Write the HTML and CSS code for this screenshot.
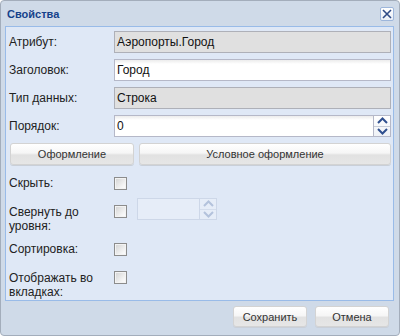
FILE: index.html
```html
<!DOCTYPE html>
<html lang="ru">
<head>
    <meta charset="UTF-8">
    <title>Свойства</title>
    <link rel="stylesheet" href="styles.css">
</head>
<body>
    <div class="window">
        <div class="window-header">
            <span class="window-title">Свойства</span>
            <span class="tool-close">
                <svg width="10" height="10" viewBox="0 0 10 10"><path d="M1 1L9 9M9 1L1 9" stroke="#2d4a86" stroke-width="1.6" fill="none"/></svg>
            </span>
        </div>
        <div class="window-body">
            <div class="field-row">
                <label class="field-label">Атрибут:</label>
                <div class="field disabled">Аэропорты.Город</div>
            </div>
            <div class="field-row">
                <label class="field-label">Заголовок:</label>
                <div class="field">Город</div>
            </div>
            <div class="field-row">
                <label class="field-label">Тип данных:</label>
                <div class="field disabled">Строка</div>
            </div>
            <div class="field-row">
                <label class="field-label">Порядок:</label>
                <div class="spinner">
                    <div class="field spinner-input">0</div>
                    <div class="spinner-trigger">
                        <span class="spin-up"><svg width="11" height="7" viewBox="0 0 11 7"><path d="M1 6L5.5 1.5L10 6" stroke="#2f4f8f" stroke-width="2" fill="none"/></svg></span>
                        <span class="spin-down"><svg width="11" height="7" viewBox="0 0 11 7"><path d="M1 1L5.5 5.5L10 1" stroke="#2f4f8f" stroke-width="2" fill="none"/></svg></span>
                    </div>
                </div>
            </div>
            <div class="button-row">
                <button class="btn btn-style">Оформление</button>
                <button class="btn btn-cond">Условное оформление</button>
            </div>

            <div class="check-row row-hide">
                <label class="field-label">Скрыть:</label>
                <span class="checkbox"></span>
            </div>
            <div class="check-row row-collapse">
                <label class="field-label">Свернуть до уровня:</label>
                <span class="checkbox"></span>
                <div class="spinner spinner-small off">
                    <div class="field spinner-input"></div>
                    <div class="spinner-trigger">
                        <span class="spin-up"><svg width="11" height="7" viewBox="0 0 11 7"><path d="M1 6L5.5 1.5L10 6" stroke="#b3c2dc" stroke-width="2" fill="none"/></svg></span>
                        <span class="spin-down"><svg width="11" height="7" viewBox="0 0 11 7"><path d="M1 1L5.5 5.5L10 1" stroke="#b3c2dc" stroke-width="2" fill="none"/></svg></span>
                    </div>
                </div>
            </div>
            <div class="check-row row-sort">
                <label class="field-label">Сортировка:</label>
                <span class="checkbox"></span>
            </div>
            <div class="check-row row-tabs">
                <label class="field-label">Отображать во вкладках:</label>
                <span class="checkbox"></span>
            </div>
        </div>
        <div class="window-footer">
            <button class="btn btn-footer">Сохранить</button>
            <button class="btn btn-footer">Отмена</button>
        </div>
    </div>
</body>
</html>
```

FILE: styles.css
```css
body {
    margin: 0;
    font-family: "Liberation Sans", Arial, sans-serif;
    font-size: 12px;
    color: #222;
    background: #ffffff;
}
.window {
    width: 400px;
    height: 336px;
    box-sizing: border-box;
    border: 1px solid #a3adbb;
    border-radius: 4px;
    background: #cfdae8;
    display: flex;
    flex-direction: column;
}
.window-header {
    height: 25px;
    display: flex;
    align-items: center;
    justify-content: space-between;
    padding: 0 5px 0 6px;
}
.window-title {
    font-weight: bold;
    font-size: 11px;
    color: #15428b;
    margin-top: 1px;
}
.tool-close {
    width: 14px;
    height: 14px;
    box-sizing: border-box;
    border: 1px solid #9db6db;
    border-radius: 2px;
    background: linear-gradient(#ffffff, #e8eef7);
    display: flex;
    align-items: center;
    justify-content: center;
    margin-top: 1px;
}
.window-body {
    height: 275px;
    box-sizing: border-box;
    margin: 0 5px 0 4px;
    border: 1px solid #99bbe8;
    background: #dfe8f6;
    padding: 4px 2px 0 3px;
}
.field-row {
    display: flex;
    align-items: center;
    height: 22px;
    margin-bottom: 6px;
}
.field-label {
    width: 105px;
    flex-shrink: 0;
    line-height: 14px;
}
.field {
    width: 277px;
    height: 22px;
    box-sizing: border-box;
    border: 1px solid #b5b8c8;
    background: linear-gradient(#ececec, #ffffff 4px);
    padding: 0 2px;
    line-height: 20px;
    color: #111;
}
.field.disabled {
    background: #e0e0e0;
    border-color: #aeb0b8;
}
.spinner {
    display: flex;
    width: 277px;
    height: 22px;
}
.spinner .spinner-input {
    flex: 1;
    width: auto;
}
.spinner-trigger {
    width: 17px;
    height: 22px;
    box-sizing: border-box;
    border: 1px solid #b5b8c8;
    border-left: none;
    display: flex;
    flex-direction: column;
    background: linear-gradient(#ffffff, #eef1f6);
}
.spinner-trigger span {
    flex: 1;
    display: flex;
    align-items: center;
    justify-content: center;
}
.spin-up {
    border-bottom: 1px solid #c6ccd8;
}
.button-row {
    display: flex;
    gap: 5px;
    margin-left: 1px;
    margin-bottom: 7px;
}
.btn {
    font-family: inherit;
    font-size: 11px;
    color: #333;
    height: 22px;
    padding: 0;
    border: 1px solid #d3d3d3;
    border-radius: 3px;
    background: linear-gradient(#ffffff 0%, #f6f6f6 45%, #e2e2e2 55%, #e6e6e6 100%);
    box-shadow: 0 1px 0 #c9cfd8;
}
.btn-style {
    width: 124px;
}
.btn-cond {
    width: 252px;
}
.check-row {
    display: flex;
    align-items: center;
}
.checkbox {
    width: 13px;
    height: 13px;
    box-sizing: border-box;
    border: 1px solid #8c8c8c;
    background: linear-gradient(135deg, #d2d2d2, #f4f4f4 70%, #ffffff);
    box-shadow: inset 0 0 0 1px #f3f3f3;
    flex-shrink: 0;
}
.row-hide {
    height: 22px;
}
.row-collapse {
    align-items: flex-start;
    margin-top: 4px;
    height: 39px;
}
.row-collapse .field-label {
    padding-top: 7px;
    padding-right: 30px;
    width: 75px;
}
.row-collapse .checkbox {
    margin-top: 7px;
}
.spinner-small {
    width: 80px;
    margin-left: 10px;
}
.spinner.off .field {
    background: #e6edf8;
    border-color: #cdd7e8;
}
.spinner.off .spinner-trigger {
    background: #e6edf8;
    border-color: #cdd7e8;
}
.spinner.off .spin-up {
    border-bottom-color: #d4ddec;
}
.row-sort {
    height: 22px;
    margin-top: 1px;
}
.row-tabs {
    align-items: flex-start;
    margin-top: 11px;
}
.row-tabs .field-label {
    padding-right: 5px;
    width: 100px;
}
.window-footer {
    flex: 1;
    display: flex;
    justify-content: flex-end;
    align-items: flex-start;
    gap: 8px;
    padding: 5px 10px 0 0;
}
.btn-footer {
    width: 74px;
    height: 21px;
}
```
